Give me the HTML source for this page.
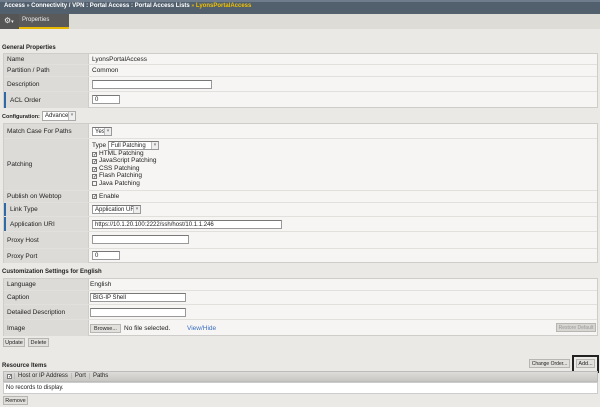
<!DOCTYPE html><html><head><style>
*{margin:0;padding:0;box-sizing:border-box;white-space:nowrap}
body{width:600px;height:407px;background:#ebe9e5;font-family:"Liberation Sans",sans-serif;font-size:6.5px;color:#222;position:relative;overflow:hidden}
.a{position:absolute}
.h{font-weight:bold;font-size:6px}
.tbl{position:absolute;left:3px;width:595px;border:1px solid #cfcdc9;background:#f6f5f3}
.r{position:absolute;left:0;right:0;border-bottom:1px solid #e2e0dc}
.l{position:absolute;left:0;top:0;bottom:0;width:85px;background:#dddbd7;border-right:1px solid #cfcdc9;padding-left:3px;display:flex;align-items:center}
.v{position:absolute;left:88px;top:0;bottom:0;display:flex;align-items:center}
.in{position:absolute;background:#fff;border:1px solid #999;border-top-color:#777;font-size:6px;padding-left:2px;display:flex;align-items:center;overflow:hidden}
.bar{border-left:2px solid #2f6aa6}
.btn{position:absolute;background:#e2e0dc;border:1px solid #b8b6b2;font-size:5.5px;display:flex;align-items:center;justify-content:center;overflow:hidden}
.cb{display:inline-block;width:5px;height:5px;border:1px solid #777;margin-right:2px;vertical-align:-1px;font-size:5px;line-height:4px;text-align:center}
.ar{position:absolute;right:0;top:0;bottom:0;width:7px;border-left:1px solid #bbb;background:#eee;font-size:5px;text-align:center;color:#888}
</style></head><body>
<div class="a" style="left:0;top:0;width:600px;height:14px;background:#52606e;border-top:2px solid #6e7c8c"></div>
<div class="a" style="left:4px;top:3px;color:#fff;font-weight:bold;font-size:6px">Access <span style="font-size:5px">»</span> Connectivity / VPN : Portal Access : Portal Access Lists <span style="color:#f0c000;font-size:5px">»</span> <span style="color:#f0c000">LyonsPortalAccess</span></div>
<div class="a" style="left:0;top:14px;width:600px;height:15px;background:#dedcd7"></div>
<div class="a" style="left:0;top:14px;width:19px;height:15px;background:#555"></div>
<div class="a" style="left:4px;top:16px;color:#eee;font-size:8px">⚙<span style="font-size:5px">▾</span></div>
<div class="a" style="left:19px;top:14px;width:50px;height:15px;background:#5a5a5a;border-bottom:2px solid #e8b800;color:#eee;font-size:6px;padding:3px 0 0 3px">Properties</div>

<div class="a h" style="left:2px;top:45px">General Properties</div>
<div class="tbl" style="top:53px;height:55px">
<div class="r" style="top:0;height:11px"><div class="l">Name</div><div class="v">LyonsPortalAccess</div></div>
<div class="r" style="top:11px;height:12px"><div class="l">Partition / Path</div><div class="v">Common</div></div>
<div class="r" style="top:23px;height:15px"><div class="l">Description</div><div class="in" style="left:88px;top:3px;width:120px;height:9px"></div></div>
<div class="r" style="top:38px;height:16px;border:0"><div class="l bar" style="padding-left:4px">ACL Order</div><div class="in" style="left:88px;top:3px;width:28px;height:9px">0</div></div>
</div>

<div class="a h" style="left:2px;top:114px;font-size:5.5px">Configuration:</div>
<div class="in" style="left:42px;top:111px;width:34px;height:10px;border-color:#aaa">Advanced<div class="ar">▾</div></div>
<div class="tbl" style="top:123px;height:140px">
<div class="r" style="top:0;height:15px"><div class="l">Match Case For Paths</div><div class="in" style="left:88px;top:3px;width:20px;height:9px">Yes<div class="ar">▾</div></div></div>
<div class="r" style="top:15px;height:52px"><div class="l">Patching</div>
<div class="a" style="left:88px;top:3px;line-height:7.5px">Type<br><span class="cb">✓</span>HTML Patching<br><span class="cb">✓</span>JavaScript Patching<br><span class="cb">✓</span>CSS Patching<br><span class="cb">✓</span>Flash Patching<br><span class="cb"></span>Java Patching</div>
<div class="in" style="left:104px;top:2px;width:51px;height:9px">Full Patching<div class="ar">▾</div></div></div>
<div class="r" style="top:67px;height:12px"><div class="l">Publish on Webtop</div><div class="v"><span class="cb">✓</span>Enable</div></div>
<div class="r" style="top:79px;height:14px"><div class="l bar" style="padding-left:4px">Link Type</div><div class="in" style="left:88px;top:2px;width:49px;height:9px">Application URI<div class="ar">▾</div></div></div>
<div class="r" style="top:93px;height:15px"><div class="l bar" style="padding-left:4px">Application URI</div><div class="in" style="left:88px;top:3px;width:190px;height:9px">https://10.1.20.100:2222/ssh/host/10.1.1.246</div></div>
<div class="r" style="top:108px;height:17px"><div class="l">Proxy Host</div><div class="in" style="left:88px;top:3px;width:97px;height:9px"></div></div>
<div class="r" style="top:125px;height:14px;border:0"><div class="l">Proxy Port</div><div class="in" style="left:88px;top:2px;width:28px;height:9px">0</div></div>
</div>

<div class="a h" style="left:2px;top:269px">Customization Settings for English</div>
<div class="tbl" style="top:278px;height:58px">
<div class="r" style="top:0;height:12px"><div class="l">Language</div><div class="v" style="left:86px">English</div></div>
<div class="r" style="top:12px;height:14px"><div class="l">Caption</div><div class="in" style="left:86px;top:2px;width:96px;height:9px">BIG-IP Shell</div></div>
<div class="r" style="top:26px;height:15px"><div class="l">Detailed Description</div><div class="in" style="left:86px;top:3px;width:96px;height:9px"></div></div>
<div class="r" style="top:41px;height:16px;border:0"><div class="l">Image</div><div class="btn" style="left:86px;top:4px;width:31px;height:9px">Browse...</div><div class="a" style="left:120px;top:5px">No file selected.</div><div class="a" style="left:183px;top:5px;color:#3a6fc0">View/Hide</div><div class="btn" style="left:552px;top:3px;width:40px;height:9px;color:#999;background:#d8d6d2;font-size:5px">Restore Default</div></div>
</div>
<div class="btn" style="left:3px;top:338px;width:22px;height:9px">Update</div>
<div class="btn" style="left:28px;top:338px;width:21px;height:9px">Delete</div>

<div class="a h" style="left:2px;top:363px">Resource Items</div>
<div class="btn" style="left:529px;top:359px;width:41px;height:9px;font-size:5px">Change Order...</div>
<div class="a" style="left:572px;top:355px;width:27px;height:18px;border:2px solid #222"></div>
<div class="btn" style="left:576px;top:359px;width:19px;height:9px">Add...</div>
<div class="a" style="left:3px;top:371px;width:595px;height:11px;background:linear-gradient(#dedcd8,#c9c7c3);border:1px solid #bbb;font-size:6px;line-height:9px">
<span class="cb" style="margin-left:3px;background:#fff">✓</span><span style="border-left:1px solid #bbb;padding:0 3px 0 3px">Host or IP Address</span><span style="border-left:1px solid #bbb;padding:0 3px">Port</span><span style="border-left:1px solid #bbb;padding:0 3px">Paths</span></div>
<div class="a" style="left:3px;top:382px;width:595px;height:12px;background:#fff;border:1px solid #ccc;padding:2px 0 0 2px;font-size:6px">No records to display.</div>
<div class="btn" style="left:3px;top:396px;width:25px;height:9px">Remove</div>
</body></html>
